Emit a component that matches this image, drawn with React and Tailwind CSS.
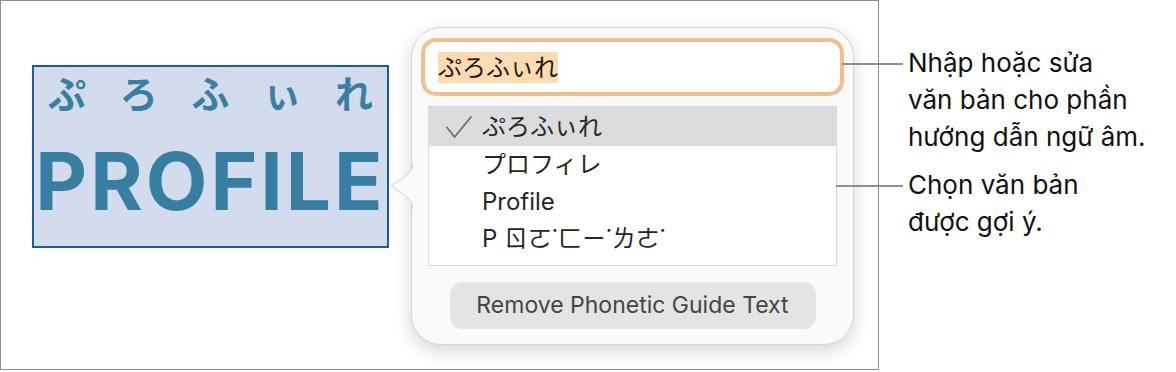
import { useState } from 'react';

const font = { fontFamily: 'Inter, "Noto Sans CJK JP", sans-serif' };

const options = [
  { id: 'hira', label: 'ぷろふぃれ' },
  { id: 'kata', label: 'プロフィレ' },
  { id: 'latin', label: 'Profile' },
  { id: 'bopo', label: 'P ㄖㄛ˙ㄈㄧ˙ㄌㄜ˙' },
];

function Check() {
  return (
    <svg width="28" height="24" viewBox="0 0 28 24" fill="none" className="shrink-0">
      <path d="M2 12.5 L9.5 22 L26 2" stroke="#707070" strokeWidth="1.8" strokeLinecap="round" strokeLinejoin="round" />
    </svg>
  );
}

function Popover() {
  const [selected, setSelected] = useState('hira');

  return (
    <div className="relative mt-[26px] ml-[22px] w-[443px] h-[318px] rounded-[30px] border border-[#d4d4d4] bg-[#fafafa] shadow-[0_6px_18px_rgba(0,0,0,0.16)] flex flex-col items-center pt-[10px]">
      {/* arrow */}
      <svg
        width="24"
        height="48"
        viewBox="0 0 24 48"
        className="absolute left-[-23px] top-[134px]"
      >
        <path d="M24 0 C24 8 19 12 14 16 L2 24 L14 32 C19 36 24 40 24 48 Z" fill="#fafafa" />
        <path d="M24 0 C24 8 19 12 14 16 L2 24 L14 32 C19 36 24 40 24 48" fill="none" stroke="#d0d0d0" strokeWidth="1" />
      </svg>

      <div className="w-[423px] h-[58px] rounded-[15px] border-[4px] border-[#f4bd8d] bg-white flex items-center pl-[13px]">
        <span className="bg-[#fddbb0] text-[24px] leading-[31px] text-[#1a1a1a]">ぷろふぃれ</span>
      </div>

      <div className="mt-[10px] w-[409px] h-[160px] border border-[#dadada] bg-white">
        {options.map((o) => (
          <div
            key={o.id}
            onClick={() => setSelected(o.id)}
            className={`h-[37px] flex items-center ${selected === o.id ? 'bg-[#dcdcdc] h-[39px]' : ''}`}
          >
            <div className="w-[53px] pl-[16px] flex items-center">
              {selected === o.id && <Check />}
            </div>
            <span
              className="text-[24px] text-[#262626]"
              style={o.id === 'bopo' ? { fontFamily: 'Inter, "Noto Sans CJK TC", sans-serif' } : undefined}
            >
              {o.label}
            </span>
          </div>
        ))}
      </div>

      <button
        type="button"
        className="mt-[16px] w-[366px] h-[47px] rounded-[12px] bg-[#e4e4e4] text-[23px] text-[#454545]"
      >
        Remove Phonetic Guide Text
      </button>
    </div>
  );
}

export default function App() {
  return (
    <div className="relative w-[1176px] h-[372px] bg-white flex" style={font}>
      <div className="w-[879px] h-[370px] border border-[#8c8c8c] flex items-start">
        <div className="mt-[64px] ml-[31px] w-[357px] h-[183px] border-2 border-[#1d5ba8] bg-[#d2dcec] flex flex-col items-center">
          <div className="w-full flex justify-between pl-[14px] pr-[14px] pt-[4px] text-[38px] leading-[46px] font-semibold text-[#3a7ea3]">
            <span>ぷ</span>
            <span>ろ</span>
            <span>ふ</span>
            <span>ぃ</span>
            <span>れ</span>
          </div>
          <div className="mt-[24px] text-[80px] leading-[80px] font-bold tracking-[3px] text-[#377ea2]">PROFILE</div>
        </div>
        <Popover />
      </div>

      <div className="pl-[29px] flex flex-col text-[26px] leading-[37px] text-[#111]">
        <p className="mt-[44px]">
          Nhập hoặc sửa
          <br />
          văn bản cho phần
          <br />
          hướng dẫn ngữ âm.
        </p>
        <p className="mt-[11px]">
          Chọn văn bản
          <br />
          được gợi ý.
        </p>
      </div>

      {/* callout lines */}
      <div className="absolute left-[842px] top-[63px] w-[61px] h-[2px] bg-[#8e8e8e]" />
      <div className="absolute left-[836px] top-[185px] w-[67px] h-[2px] bg-[#8e8e8e]" />
    </div>
  );
}
